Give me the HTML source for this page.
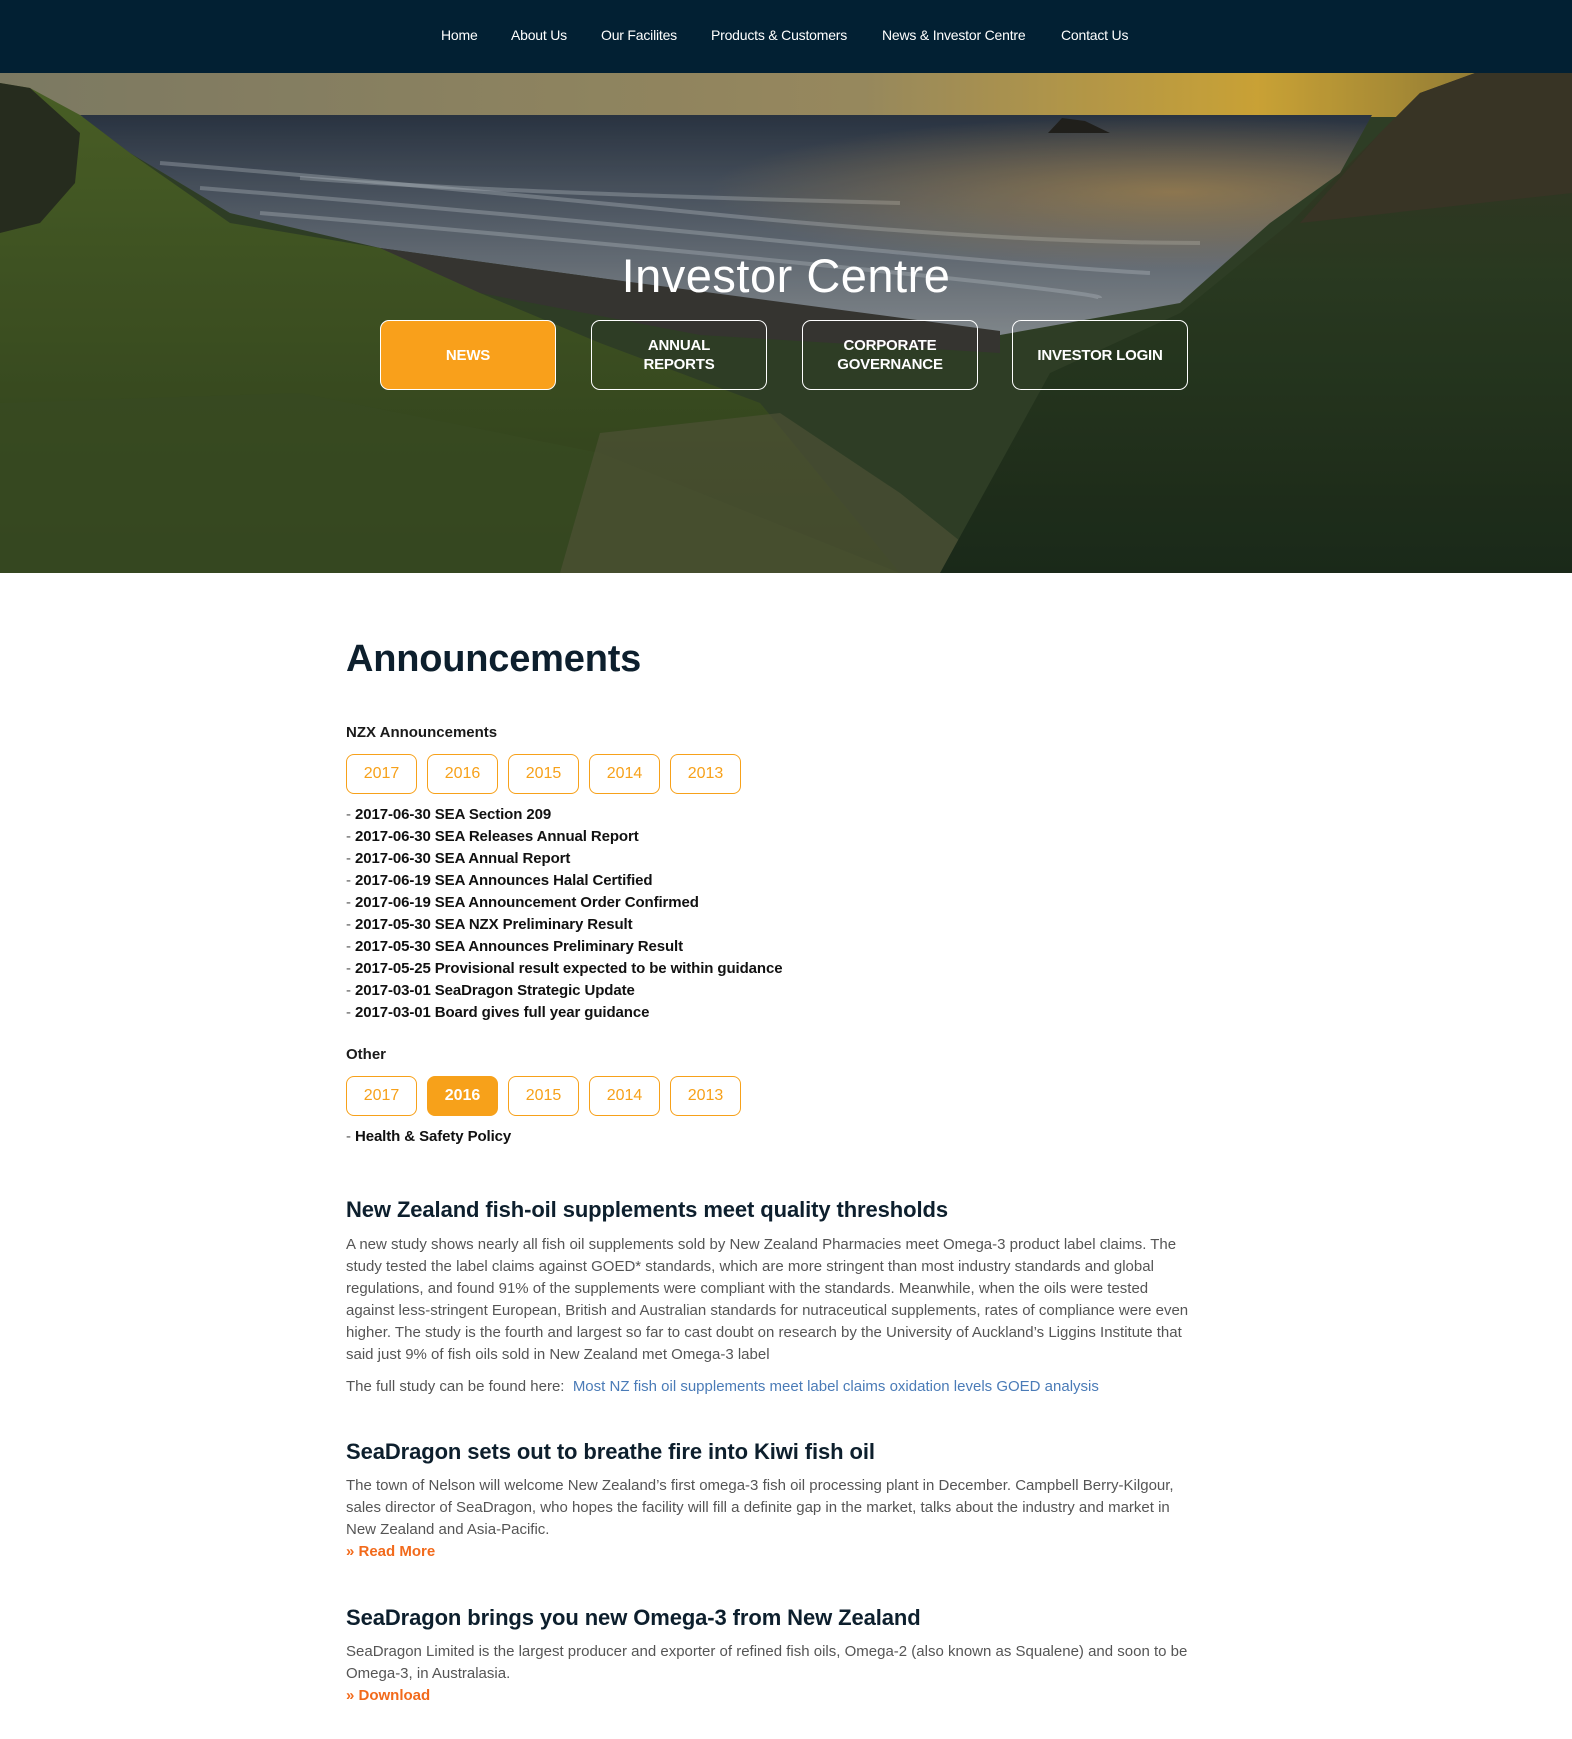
<!DOCTYPE html>
<html><head><meta charset="utf-8"><style>
*{margin:0;padding:0;box-sizing:border-box}
body{width:1572px;height:1739px;background:#fff;font-family:"Liberation Sans",Arial,sans-serif;position:relative;overflow:hidden}
.nav{position:absolute;left:0;top:0;width:1572px;height:73px;background:#022033}
.nav a{position:absolute;top:27px;color:#fff;font-size:14px;text-decoration:none;letter-spacing:-0.2px;white-space:nowrap}
.hero{position:absolute;left:0;top:73px;width:1572px;height:500px;overflow:hidden}
.title{position:absolute;left:0;width:1572px;text-align:center;color:#fff;font-size:47px;font-weight:300;letter-spacing:0.5px}
.hb{position:absolute;top:320px;width:176px;height:70px;border:1.5px solid #fff;border-radius:9px;color:#fff;font-weight:bold;font-size:15px;display:flex;align-items:center;justify-content:center;text-align:center;line-height:19px;letter-spacing:-0.2px}
.abs{position:absolute;left:346px;white-space:nowrap}
h1.abs{font-size:38px;font-weight:bold;color:#0d1f2d;top:638px;letter-spacing:-0.2px}
.lab{font-size:15px;font-weight:bold;color:#1a1a1a}
.yr{position:absolute;width:71px;height:40px;border:1.5px solid #f7a11a;border-radius:8px;color:#f7a11a;font-size:16px;display:flex;align-items:center;justify-content:center}
.yr.on{background:#f7a11a;color:#fff;font-weight:bold}
.li{font-size:15px;color:#111;line-height:22px;font-weight:bold;letter-spacing:-0.1px}
.li span{color:#555;font-weight:normal}
h2.abs{font-size:22px;font-weight:bold;color:#0d1f2d;letter-spacing:-0.1px}
.p{font-size:15px;color:#555;line-height:22px}
.lnk{color:#4a7bb7}
.or{color:#f26a1b;font-weight:bold;font-size:15px}
</style></head><body>
<div class="nav">
<a style="left:441px">Home</a>
<a style="left:511px">About Us</a>
<a style="left:601px">Our Facilites</a>
<a style="left:711px">Products &amp; Customers</a>
<a style="left:882px">News &amp; Investor Centre</a>
<a style="left:1061px">Contact Us</a>
</div>
<div class="hero">
<svg width="1572" height="500" viewBox="0 0 1572 500">
<defs>
<linearGradient id="sky" x1="0" y1="0" x2="1" y2="0"><stop offset="0" stop-color="#8a876e"/><stop offset="0.55" stop-color="#a89868"/><stop offset="0.8" stop-color="#e0b43c"/><stop offset="1" stop-color="#8a7a3a"/></linearGradient>
<linearGradient id="sea" x1="0" y1="0" x2="0" y2="1"><stop offset="0" stop-color="#2e3948"/><stop offset="0.45" stop-color="#5a6470"/><stop offset="1" stop-color="#8e959a"/></linearGradient>
<radialGradient id="glow" cx="0.85" cy="0.35" r="0.35"><stop offset="0" stop-color="#d0a050" stop-opacity="0.6"/><stop offset="1" stop-color="#d0a050" stop-opacity="0"/></radialGradient>
<linearGradient id="lg" x1="0" y1="0" x2="0" y2="1"><stop offset="0" stop-color="#51692a"/><stop offset="1" stop-color="#34461f"/></linearGradient>
<linearGradient id="rg" x1="0" y1="0" x2="0" y2="1"><stop offset="0" stop-color="#3e3a28"/><stop offset="0.4" stop-color="#2e4024"/><stop offset="1" stop-color="#1e2e1c"/></linearGradient>
</defs>
<rect width="1572" height="500" fill="#34452a"/>
<rect width="1572" height="44" fill="url(#sky)"/>
<polygon points="45,42 1372,42 1340,100 1270,150 1180,230 1000,262 600,205 380,175 230,140 130,80 80,42" fill="url(#sea)"/>
<g stroke="#c8d0d6" stroke-opacity="0.35" stroke-width="4" fill="none">
<path d="M160 90 Q400 110 700 140 T1200 170"/>
<path d="M200 115 Q450 135 750 165 T1150 200"/>
<path d="M260 140 Q500 160 800 190 T1100 225"/>
<path d="M300 105 Q500 120 900 130"/>
</g>
<polygon points="45,42 1372,42 1340,100 1270,150 1180,230 1000,262 600,205 380,175 230,140 130,80 80,42" fill="url(#glow)"/>
<path d="M1048 60 L1062 45 L1085 48 L1110 60 Z" fill="#24231f"/>
<polygon points="380,175 600,205 1000,258 1000,280 700,262 480,220 390,188" fill="#3b3a36"/>
<polygon points="0,10 30,15 80,42 130,80 230,150 380,175 480,220 600,270 760,330 900,500 0,500" fill="url(#lg)"/>
<polygon points="0,10 30,15 80,60 75,110 40,150 0,160" fill="#2b3222"/>
<polygon points="0,330 300,320 600,380 900,500 0,500" fill="#3f5326" opacity="0.8"/>
<polygon points="600,360 780,340 900,420 1000,500 560,500" fill="#565a3c" opacity="0.7"/>
<polygon points="1572,0 1475,0 1420,20 1380,60 1290,150 1180,240 1050,300 940,500 1572,500" fill="url(#rg)"/>
<polygon points="1475,0 1572,0 1572,120 1300,150 1380,60 1420,20" fill="#3f3a2a"/>
<rect width="1572" height="500" fill="#000" opacity="0.1"/>
</svg>
<div class="title" style="top:175px">Investor Centre</div>
</div>
<div class="hb" style="left:380px;background:#f9a01b">NEWS</div>
<div class="hb" style="left:591px">ANNUAL<br>REPORTS</div>
<div class="hb" style="left:802px">CORPORATE<br>GOVERNANCE</div>
<div class="hb" style="left:1012px">INVESTOR LOGIN</div>

<h1 class="abs">Announcements</h1>
<div class="abs lab" style="top:724px">NZX Announcements</div>
<div class="yr" style="left:346px;top:754px">2017</div>
<div class="yr" style="left:427px;top:754px">2016</div>
<div class="yr" style="left:508px;top:754px">2015</div>
<div class="yr" style="left:589px;top:754px">2014</div>
<div class="yr" style="left:670px;top:754px">2013</div>
<div class="abs li" style="top:804px">
<div><span>- </span>2017-06-30 SEA Section 209</div>
<div><span>- </span>2017-06-30 SEA Releases Annual Report</div>
<div><span>- </span>2017-06-30 SEA Annual Report</div>
<div><span>- </span>2017-06-19 SEA Announces Halal Certified</div>
<div><span>- </span>2017-06-19 SEA Announcement Order Confirmed</div>
<div><span>- </span>2017-05-30 SEA NZX Preliminary Result</div>
<div><span>- </span>2017-05-30 SEA Announces Preliminary Result</div>
<div><span>- </span>2017-05-25 Provisional result expected to be within guidance</div>
<div><span>- </span>2017-03-01 SeaDragon Strategic Update</div>
<div><span>- </span>2017-03-01 Board gives full year guidance</div>
</div>
<div class="abs lab" style="top:1046px">Other</div>
<div class="yr" style="left:346px;top:1076px">2017</div>
<div class="yr on" style="left:427px;top:1076px">2016</div>
<div class="yr" style="left:508px;top:1076px">2015</div>
<div class="yr" style="left:589px;top:1076px">2014</div>
<div class="yr" style="left:670px;top:1076px">2013</div>
<div class="abs li" style="top:1126px"><span>- </span>Health &amp; Safety Policy</div>

<h2 class="abs" style="top:1197px">New Zealand fish-oil supplements meet quality thresholds</h2>
<div class="abs p" style="top:1234px">
<div>A new study shows nearly all fish oil supplements sold by New Zealand Pharmacies meet Omega-3 product label claims. The</div>
<div>study tested the label claims against GOED* standards, which are more stringent than most industry standards and global</div>
<div>regulations, and found 91% of the supplements were compliant with the standards. Meanwhile, when the oils were tested</div>
<div>against less-stringent European, British and Australian standards for nutraceutical supplements, rates of compliance were even</div>
<div>higher. The study is the fourth and largest so far to cast doubt on research by the University of Auckland’s Liggins Institute that</div>
<div>said just 9% of fish oils sold in New Zealand met Omega-3 label</div>
</div>
<div class="abs p" style="top:1376px">The full study can be found here:&nbsp; <span class="lnk">Most NZ fish oil supplements meet label claims oxidation levels GOED analysis</span></div>

<h2 class="abs" style="top:1439px">SeaDragon sets out to breathe fire into Kiwi fish oil</h2>
<div class="abs p" style="top:1475px">
<div>The town of Nelson will welcome New Zealand’s first omega-3 fish oil processing plant in December. Campbell Berry-Kilgour,</div>
<div>sales director of SeaDragon, who hopes the facility will fill a definite gap in the market, talks about the industry and market in</div>
<div>New Zealand and Asia-Pacific.</div>
</div>
<div class="abs or" style="top:1543px">» Read More</div>

<h2 class="abs" style="top:1605px">SeaDragon brings you new Omega-3 from New Zealand</h2>
<div class="abs p" style="top:1641px">
<div>SeaDragon Limited is the largest producer and exporter of refined fish oils, Omega-2 (also known as Squalene) and soon to be</div>
<div>Omega-3, in Australasia.</div>
</div>
<div class="abs or" style="top:1687px">» Download</div>
</body></html>
